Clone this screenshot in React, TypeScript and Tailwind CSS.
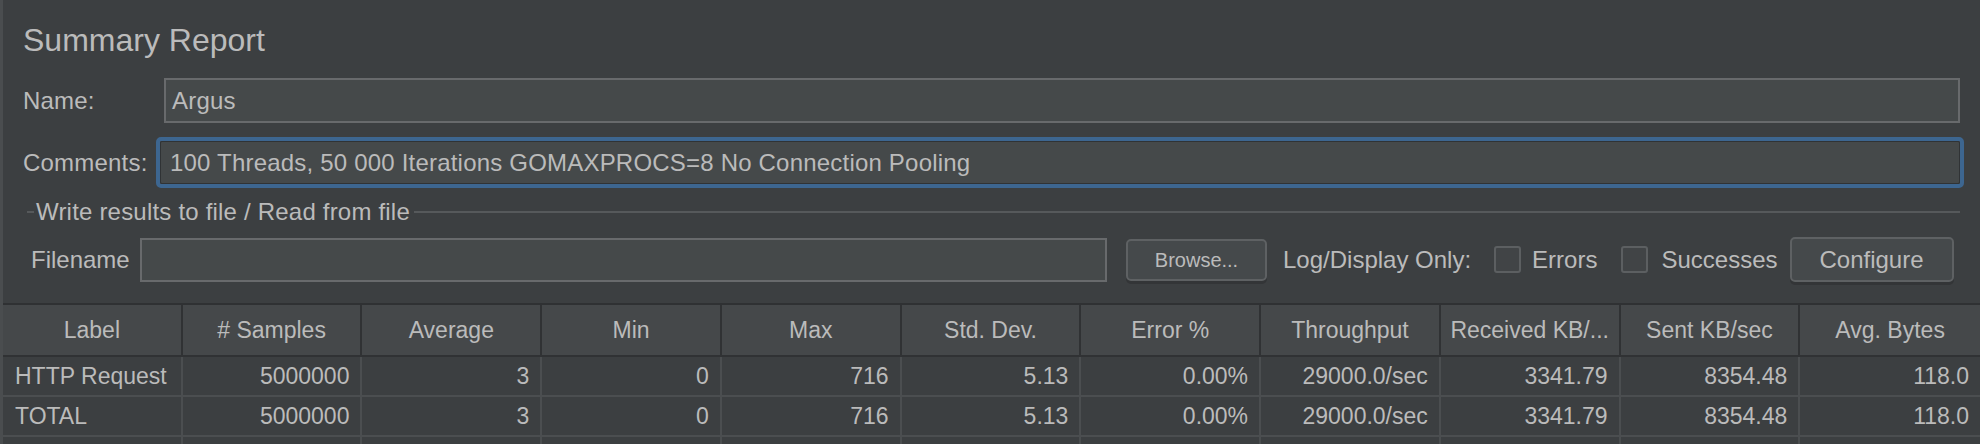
import React from "react";

const columns = [
  "Label",
  "# Samples",
  "Average",
  "Min",
  "Max",
  "Std. Dev.",
  "Error %",
  "Throughput",
  "Received KB/...",
  "Sent KB/sec",
  "Avg. Bytes",
];

const rows = [
  ["HTTP Request", "5000000", "3", "0", "716", "5.13", "0.00%", "29000.0/sec", "3341.79", "8354.48", "118.0"],
  ["TOTAL", "5000000", "3", "0", "716", "5.13", "0.00%", "29000.0/sec", "3341.79", "8354.48", "118.0"],
  ["", "", "", "", "", "", "", "", "", "", ""],
];

function Checkbox() {
  return <div className="w-[27px] h-[27px] shrink-0 rounded-[3px] border-2 border-[#5c5f61] bg-[#414446]" />;
}

export default function App() {
  return (
    <div className="w-[1980px] h-[444px] overflow-hidden bg-[#3c3f41] border-l-[3px] border-[#4a4d4f] text-[#bbbbbb] font-['Liberation_Sans',Arial,sans-serif] flex flex-col">
      {/* Title */}
      <h1 className="shrink-0 ml-[20px] mt-[24px] h-[32px] text-[32px] leading-[32px] whitespace-nowrap">Summary Report</h1>

      {/* Name */}
      <div className="shrink-0 mt-[22px] h-[45px] flex items-center text-[24px] tracking-[0.2px]">
        <span className="w-[161px] shrink-0 pl-[20px]">Name:</span>
        <div className="flex-1 mr-[20px] h-full border-2 border-[#686a6c] bg-[#45494a] pl-[6px] flex items-center">Argus</div>
      </div>

      {/* Comments (focused) */}
      <div className="shrink-0 mt-[14px] h-[51px] flex items-center text-[24px] tracking-[0.2px]">
        <span className="w-[153px] shrink-0 pl-[20px]">Comments:</span>
        <div className="flex-1 mr-[16px] h-full rounded-[5px] border-[4px] border-[#3d6690]">
          <div className="h-full border border-[#303335] bg-[#45494a] rounded-[2px] pl-[9px] flex items-center whitespace-nowrap">
            100 Threads, 50 000 Iterations GOMAXPROCS=8 No Connection Pooling
          </div>
        </div>
      </div>

      {/* Group title */}
      <div className="shrink-0 mt-[12px] h-[24px] flex items-center text-[24px] tracking-[0.2px]">
        <div className="ml-[24px] w-[7px] h-[2px] bg-[#56595b]" />
        <span className="ml-[2px] leading-[24px] whitespace-nowrap">Write results to file / Read from file</span>
        <div className="flex-1 ml-[4px] mr-[20px] h-[2px] bg-[#56595b]" />
      </div>

      {/* Filename row */}
      <div className="shrink-0 mt-[13px] h-[45px] flex items-center text-[24px] whitespace-nowrap">
        <span className="w-[137px] shrink-0 pl-[28px]">Filename</span>
        <div className="w-[967px] h-[44px] shrink-0 border-2 border-[#686a6c] bg-[#45494a]" />
        <button className="ml-[19px] w-[141px] h-[42px] shrink-0 rounded-[5px] border-2 border-[#5e6163] bg-[#45494b] shadow-[0_3px_0_#333537] text-[20px] text-[#bbbbbb]">
          Browse...
        </button>
        <span className="ml-[16px]">Log/Display Only:</span>
        <div className="ml-[23px]">
          <Checkbox />
        </div>
        <span className="ml-[11px]">Errors</span>
        <div className="ml-[24px]">
          <Checkbox />
        </div>
        <span className="ml-[13px]">Successes</span>
        <button className="ml-[12px] w-[164px] h-[45px] shrink-0 rounded-[5px] border-2 border-[#5e6163] bg-[#45494b] shadow-[0_3px_0_#333537] text-[24px] text-[#bbbbbb]">
          Configure
        </button>
      </div>

      {/* Table */}
      <div className="shrink-0 mt-[21px] border-t-2 border-[#2f3133] text-[23px] whitespace-nowrap">
        <div className="grid grid-cols-11 h-[52px] bg-[#45484a] border-b-2 border-[#303234]">
          {columns.map((c) => (
            <div key={c} className="flex items-center justify-center border-r-2 border-[#303234] last:border-r-0 overflow-hidden">
              {c}
            </div>
          ))}
        </div>
        {rows.map((r, i) => (
          <div key={i} className="grid grid-cols-11 h-[40px] border-b-2 border-[#4b4e50]">
            {r.map((v, j) => (
              <div
                key={j}
                className={
                  j === 0
                    ? "flex items-center pl-[12px] border-r-2 border-[#4b4e50]"
                    : "flex items-center justify-end pr-[11px] border-r-2 border-[#4b4e50] last:border-r-0"
                }
              >
                {v}
              </div>
            ))}
          </div>
        ))}
      </div>
    </div>
  );
}
